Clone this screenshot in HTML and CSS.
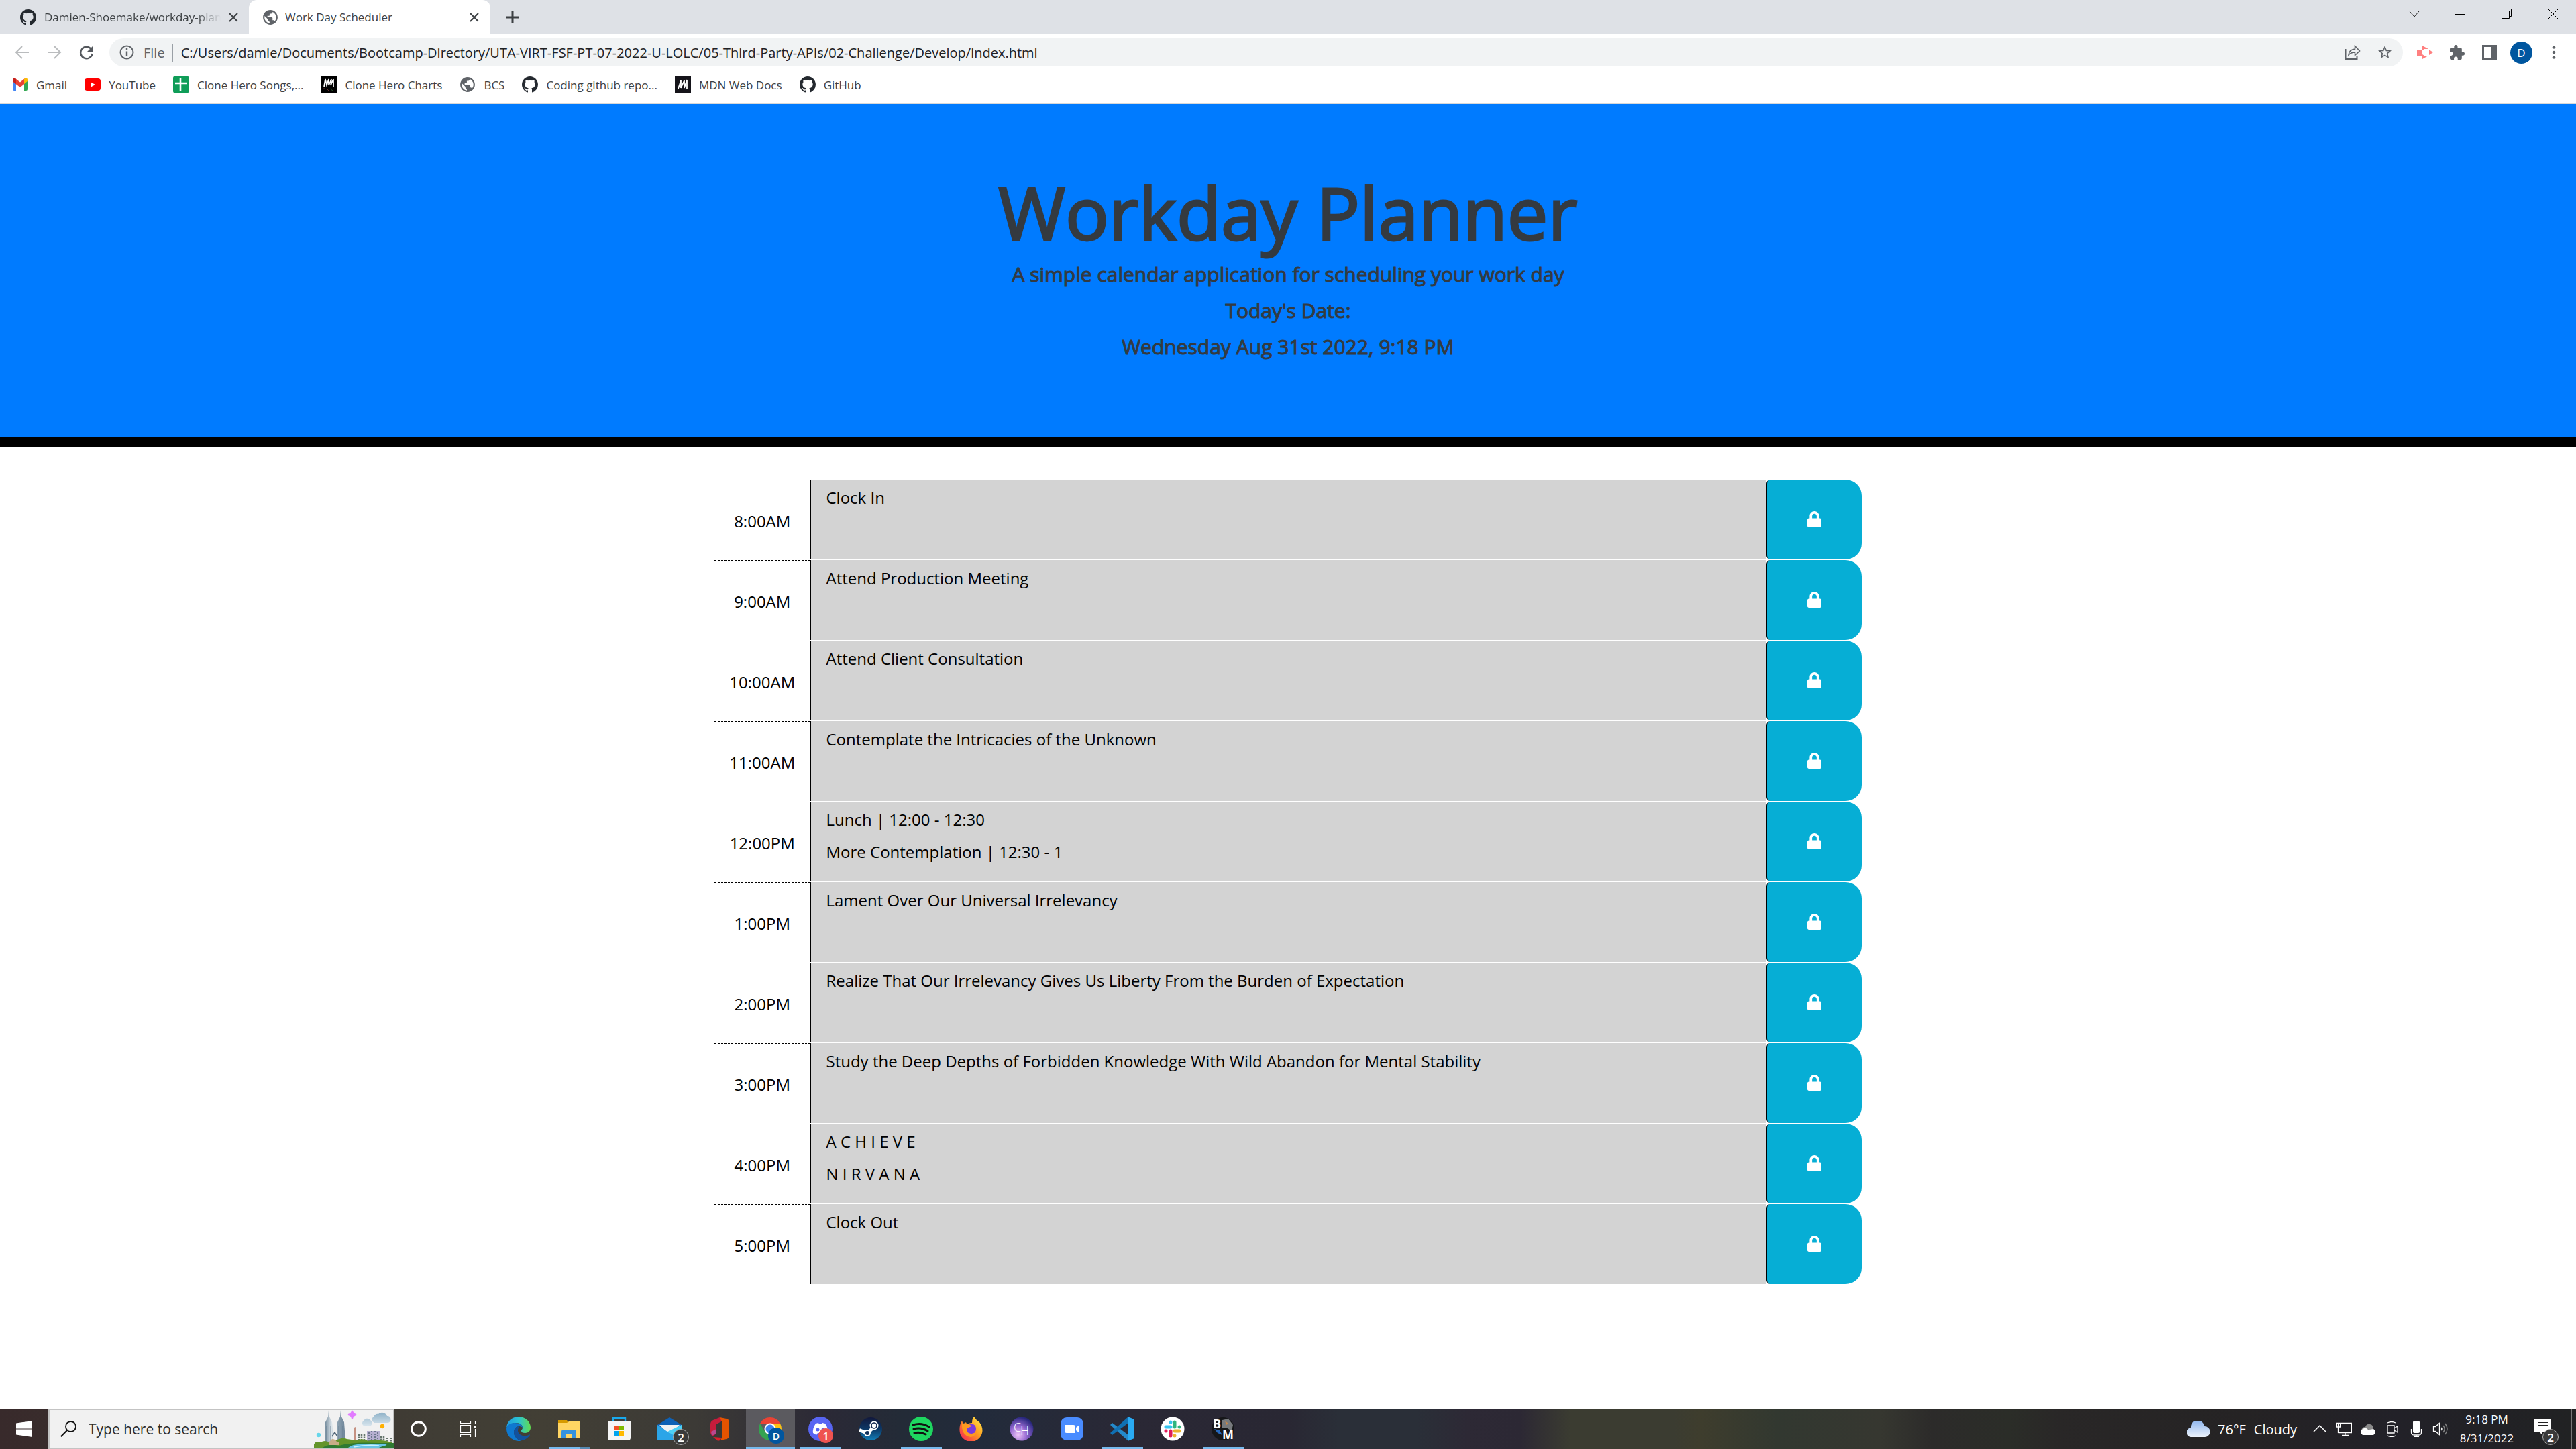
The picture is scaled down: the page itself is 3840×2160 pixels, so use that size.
FILE: index.html
```html
<!DOCTYPE html>
<html lang="en">
<head>
<meta charset="utf-8">
<title>Work Day Scheduler</title>
<link rel="stylesheet" href="styles.css">
</head>
<body>
<svg class="defs" aria-hidden="true">
  <symbol id="github" viewBox="0 0 16 16"><path d="M8 0C3.58 0 0 3.58 0 8c0 3.54 2.29 6.53 5.47 7.59.4.07.55-.17.55-.38 0-.19-.01-.82-.01-1.49-2.01.37-2.53-.49-2.69-.94-.09-.23-.48-.94-.82-1.13-.28-.15-.68-.52-.01-.53.63-.01 1.08.58 1.23.82.72 1.21 1.87.87 2.33.66.07-.52.28-.87.51-1.07-1.78-.2-3.64-.89-3.64-3.95 0-.87.31-1.59.82-2.15-.08-.2-.36-1.02.08-2.12 0 0 .67-.21 2.2.82.64-.18 1.32-.27 2-.27s1.36.09 2 .27c1.53-1.04 2.2-.82 2.2-.82.44 1.1.16 1.92.08 2.12.51.56.82 1.27.82 2.15 0 3.07-1.87 3.75-3.65 3.95.29.25.54.73.54 1.48 0 1.07-.01 1.93-.01 2.2 0 .21.15.46.55.38A8.01 8.01 0 0 0 16 8c0-4.42-3.58-8-8-8z" fill="#24292f"/></symbol>
  <symbol id="globe" viewBox="1 1 22 22"><path fill="#5f6368" d="M12 2C6.480 2 2 6.480 2 12s4.480 10 10 10 10-4.480 10-10S17.520 2 12 2zm-1 17.930c-3.950-.49-7-3.850-7-7.930 0-.62.08-1.210.21-1.790L9 15v1c0 1.100.9 2 2 2v1.930zm6.900-2.540c-.26-.81-1-1.390-1.900-1.390h-1v-3c0-.55-.45-1-1-1H8v-2h2c.55 0 1-.45 1-1V7h2c1.100 0 2-.9 2-2v-.41c2.930 1.190 5 4.060 5 7.410 0 2.080-.8 3.970-2.100 5.390z"/></symbol>
  <symbol id="close" viewBox="0 0 14 14"><path d="M1 1l12 12M13 1L1 13" stroke="#3c4043" stroke-width="2" fill="none"/></symbol>
  <symbol id="lock" viewBox="0 0 448 512"><path fill="#fff" d="M400 224h-24v-72C376 68.200 307.800 0 224 0S72 68.200 72 152v72H48c-26.500 0-48 21.500-48 48v192c0 26.500 21.500 48 48 48h352c26.500 0 48-21.500 48-48V272c0-26.500-21.500-48-48-48zm-104 0H152v-72c0-39.700 32.300-72 72-72s72 32.300 72 72v72z"/></symbol>
</svg>

<header class="browser">
  <div class="tabs">
    <div class="tab">
      <svg class="favicon"><use href="#github"/></svg>
      <span class="tab-title faded">Damien-Shoemake/workday-planner</span>
      <button class="tab-close" aria-label="Close tab"><svg><use href="#close"/></svg></button>
    </div>
    <div class="tab active">
      <svg class="favicon"><use href="#globe"/></svg>
      <span class="tab-title">Work Day Scheduler</span>
      <button class="tab-close" aria-label="Close tab"><svg><use href="#close"/></svg></button>
    </div>
    <button class="new-tab" aria-label="New tab"><svg width="18" height="18" viewBox="0 0 18 18"><path d="M9 0v18M0 9h18" stroke="#3c4043" stroke-width="3"/></svg></button>
    <div class="window-controls">
      <button aria-label="Search tabs"><svg width="16" height="16" viewBox="0 0 16 16"><path d="M1 4l7 8 7-8" fill="none" stroke="#222"/></svg></button>
      <button aria-label="Minimize"><svg width="16" height="16" viewBox="0 0 16 16"><path d="M0 8.500h15" stroke="#000"/></svg></button>
      <button aria-label="Restore"><svg width="16" height="16" viewBox="0 0 16 16"><path d="M.5 3.500h11v11H.5zM3.500 3.500v-3h11v11h-3" fill="none" stroke="#000"/></svg></button>
      <button aria-label="Close"><svg width="16" height="16" viewBox="0 0 16 16"><path d="M.5.5l15 15M15.500.5l-15 15" stroke="#000"/></svg></button>
    </div>
  </div>

  <div class="toolbar">
    <div class="nav">
      <button aria-label="Back"><svg width="22" height="22" viewBox="0 0 22 22"><path d="M21 11H2M11 2L2 11l9 9" fill="none" stroke="#babcbe" stroke-width="2"/></svg></button>
      <button aria-label="Forward"><svg width="22" height="22" viewBox="0 0 22 22"><path d="M1 11h19M11 2l9 9-9 9" fill="none" stroke="#babcbe" stroke-width="2"/></svg></button>
      <button aria-label="Reload"><svg width="22" height="22" viewBox="0 0 22 22"><path d="M18 6.500A8.700 8.700 0 1 0 19.500 13" fill="none" stroke="#54585d" stroke-width="2.500"/><path d="M21 1v9h-9z" fill="#54585d"/></svg></button>
    </div>
    <div class="omnibox">
      <svg width="22" height="22" viewBox="0 0 22 22"><circle cx="11" cy="11" r="9.500" fill="none" stroke="#5f6368" stroke-width="2"/><path d="M11 5v2.500M11 9.500V17" stroke="#5f6368" stroke-width="2.400"/></svg>
      <label class="scheme" for="url">File</label>
      <input id="url" class="url" type="text" value="C:/Users/damie/Documents/Bootcamp-Directory/UTA-VIRT-FSF-PT-07-2022-U-LOLC/05-Third-Party-APIs/02-Challenge/Develop/index.html">
      <button aria-label="Share"><svg width="24" height="22" viewBox="0 0 24 22"><path d="M1.500 6v15h17v-4" fill="none" stroke="#5f6368" stroke-width="2"/><path d="M6 15c.5-5 4-8.500 9.500-9V1.500L22.500 9l-7 6.500V11C11.500 11 8.500 12 6 15z" fill="none" stroke="#5f6368" stroke-width="1.600"/></svg></button>
      <button aria-label="Bookmark this page"><svg width="22" height="22" viewBox="1 1 22 22"><path fill="#5f6368" d="M22 9.240l-7.190-.62L12 2 9.190 8.630 2 9.240l5.460 4.730L5.820 21 12 17.270 18.180 21l-1.630-7.030L22 9.240zM12 15.400l-3.760 2.270 1-4.280-3.320-2.880 4.380-.38L12 6.100l1.710 4.040 4.380.38-3.320 2.880 1 4.280L12 15.400z"/></svg></button>
    </div>
    <div class="extensions">
      <button aria-label="Screen recorder"><svg width="24" height="20" viewBox="0 0 24 20"><path fill="#ff8080" d="M0 6h7v9H0zM8 0l9 5H11l-3 2zM8 20l9-5H11l-3-2zM18 6l6 4-6 4z"/><path d="M8 8h2V6h7v8h-7v-2H8z" fill="#fff"/></svg></button>
      <button aria-label="Extensions"><svg width="22" height="22" viewBox="2 1 21 21"><path fill="#5f6368" d="M20.500 11H19V7c0-1.100-.9-2-2-2h-4V3.500a2.500 2.500 0 0 0-5 0V5H4c-1.100 0-2 .9-2 2v3.800h1.500a2.700 2.700 0 0 1 0 5.400H2V20c0 1.100.9 2 2 2h3.800v-1.500a2.700 2.700 0 0 1 5.400 0V22H17c1.100 0 2-.9 2-2v-4h1.500a2.500 2.500 0 0 0 0-5z"/></svg></button>
      <button aria-label="Side panel"><svg width="22" height="22" viewBox="0 0 22 22"><path fill="#5f6368" fill-rule="evenodd" d="M0 0h22v22H0zM3 3v16h11V3z"/></svg></button>
      <button class="avatar" aria-label="Profile">D</button>
      <button aria-label="Menu"><svg width="6" height="20" viewBox="0 0 6 20"><g fill="#5f6368"><circle cx="3" cy="2.500" r="2.300"/><circle cx="3" cy="10" r="2.300"/><circle cx="3" cy="17.500" r="2.300"/></g></svg></button>
    </div>
  </div>

  <nav class="bookmarks">
    <a href="#"><svg viewBox="0 0 24 24"><path fill="#4285f4" d="M1 6l5 4v11H3a2 2 0 0 1-2-2z"/><path fill="#34a853" d="M23 6l-5 4v11h3a2 2 0 0 0 2-2z"/><path fill="#ea4335" d="M1 6V4.500C1 2.500 3.500 2 5 3l7 5.500L19 3v7.500L12 16 1 7.500z"/><path fill="#fbbc04" d="M18 4l1-1c2-1 4 0 4 1.500V7l-5 4z"/><path fill="#c5221f" d="M1 4.500C1 3 3 2 5 3l1 1v7L1 7z"/></svg>Gmail</a>
    <a href="#"><svg viewBox="0 0 24 24"><rect y="3" width="24" height="18" rx="4" fill="#f00"/><path fill="#fff" d="M9.500 8.500v7L16 12z"/></svg>YouTube</a>
    <a href="#"><svg viewBox="0 0 24 24"><rect width="24" height="24" rx="2" fill="#0f9d58"/><path d="M11 3v19M3 10h18" stroke="#fff" stroke-width="2.600"/></svg>Clone Hero Songs,...</a>
    <a href="#"><svg viewBox="0 0 24 24"><path d="M0 0h24v24H0z"/><path d="M5 15l2-11 2 9 3-9v9l4-9-1 9 4-9v11" fill="none" stroke="#fff" stroke-width="1.700"/><path d="M4 18h3M9 18l3 3" stroke="#662d2d"/><path d="M14 18l4 3" stroke="#315b31"/></svg>Clone Hero Charts</a>
    <a href="#"><svg><use href="#globe"/></svg>BCS</a>
    <a href="#"><svg><use href="#github"/></svg>Coding github repo...</a>
    <a href="#"><svg viewBox="0 0 24 24"><path fill="#15141a" d="M0 0h24v24H0z"/><path d="M5 18L9 6v11l5-11v11l4-12v13" fill="none" stroke="#fff" stroke-width="1.800"/></svg>MDN Web Docs</a>
    <a href="#"><svg><use href="#github"/></svg>GitHub</a>
  </nav>
</header>

<main class="page">
  <section class="jumbotron">
    <h1>Workday Planner</h1>
    <p>A simple calendar application for scheduling your work day</p>
    <p>Today's Date:</p>
    <p>Wednesday Aug 31st 2022, 9:18 PM</p>
  </section>
  <section class="planner">
    <div class="row"><label class="hour" for="h8">8:00AM</label><textarea id="h8">Clock In</textarea><button class="save" aria-label="Save"><svg><use href="#lock"/></svg></button></div>
    <div class="row"><label class="hour" for="h9">9:00AM</label><textarea id="h9">Attend Production Meeting</textarea><button class="save" aria-label="Save"><svg><use href="#lock"/></svg></button></div>
    <div class="row"><label class="hour" for="h10">10:00AM</label><textarea id="h10">Attend Client Consultation</textarea><button class="save" aria-label="Save"><svg><use href="#lock"/></svg></button></div>
    <div class="row"><label class="hour" for="h11">11:00AM</label><textarea id="h11">Contemplate the Intricacies of the Unknown</textarea><button class="save" aria-label="Save"><svg><use href="#lock"/></svg></button></div>
    <div class="row"><label class="hour" for="h12">12:00PM</label><textarea id="h12">Lunch | 12:00 - 12:30
More Contemplation | 12:30 - 1</textarea><button class="save" aria-label="Save"><svg><use href="#lock"/></svg></button></div>
    <div class="row"><label class="hour" for="h13">1:00PM</label><textarea id="h13">Lament Over Our Universal Irrelevancy</textarea><button class="save" aria-label="Save"><svg><use href="#lock"/></svg></button></div>
    <div class="row"><label class="hour" for="h14">2:00PM</label><textarea id="h14">Realize That Our Irrelevancy Gives Us Liberty From the Burden of Expectation</textarea><button class="save" aria-label="Save"><svg><use href="#lock"/></svg></button></div>
    <div class="row"><label class="hour" for="h15">3:00PM</label><textarea id="h15">Study the Deep Depths of Forbidden Knowledge With Wild Abandon for Mental Stability</textarea><button class="save" aria-label="Save"><svg><use href="#lock"/></svg></button></div>
    <div class="row"><label class="hour" for="h16">4:00PM</label><textarea id="h16">A C H I E V E
N I R V A N A</textarea><button class="save" aria-label="Save"><svg><use href="#lock"/></svg></button></div>
    <div class="row"><label class="hour" for="h17">5:00PM</label><textarea id="h17">Clock Out</textarea><button class="save" aria-label="Save"><svg><use href="#lock"/></svg></button></div>
  </section>
</main>

<footer class="taskbar">
  <button class="start" aria-label="Start"><svg width="24" height="24" viewBox="0 0 24 24"><path fill="#fff" d="M0 3.500l10-1.400v9.400H0zM11 2l13-2v11.500H11zM0 12.500h10v9.400L0 20.500zM11 12.500h13V24l-13-2z"/></svg></button>
  <div class="search">
    <svg width="24" height="24" viewBox="0 0 24 24"><circle cx="15.500" cy="8.500" r="7.500" fill="none" stroke="#111" stroke-width="1.800"/><path d="M10 14L.8 23.200" stroke="#111" stroke-width="2"/></svg>
    <input type="text" placeholder="Type here to search" aria-label="Type here to search">
    <svg class="city" width="120" height="58" viewBox="0 0 120 58">
      <defs><linearGradient id="tower"><stop offset="0" stop-color="#6f8799"/><stop offset=".35" stop-color="#dbe4ea"/><stop offset=".6" stop-color="#8fa4b4"/><stop offset="1" stop-color="#71879a"/></linearGradient>
      <linearGradient id="cloud" x2="0" y2="1"><stop offset="0" stop-color="#8fb2c8"/><stop offset="1" stop-color="#d5e3ec"/></linearGradient></defs>
      <path fill="url(#tower)" d="M22 1l1 10 4 8 1 13v18H16V32l1-13 4-8zM40 1l1 10 4 8 1 13v18H34V32l1-13 4-8z"/>
      <path d="M19 24v24M25 24v24M37 24v24M43 24v24" stroke="#5f7789" stroke-width=".7"/>
      <path d="M27 40l4-6 4 6" fill="none" stroke="#4f6476" stroke-width="1.500"/>
      <path d="M57 2q1 5 6 6-5 1-6 6-1-5-6-6 5-1 6-6z" fill="#e27bff" stroke="#e27bff" stroke-width="2"/>
      <path fill="url(#cloud)" d="M74 24a4 4 0 0 1 0-7 6 6 0 0 1 10-1 5 5 0 0 1 1 8zM90 20a5 5 0 0 1-1-9 6 6 0 0 1 7-4 8 8 0 0 1 13 3 5 5 0 0 1 1 10z"/>
      <circle cx="102" cy="25" r="3.200" fill="#ffb000"/><circle cx="7" cy="38" r="3.200" fill="#66d6ea"/>
      <path d="M60 27l2-1v24h-2z" fill="#c59181"/>
      <path d="M67 37v14M71 37v14M75 37v14M100 40v11M104 40v11M109 42v9M115 42v9" stroke="#65756c" stroke-width="2.500" stroke-dasharray="2 1.500"/>
      <path d="M79 32h20v18H79z" fill="#b6afd0"/><path d="M82 34v16M86 32v18M91 32v18M95 34v16" stroke="#647184" stroke-width="1.800" stroke-dasharray="2 2"/>
      <path fill="#63942a" d="M0 58v-6q3-6 10-3 6-4 13 0 8-3 15-5 6-3 11 0l14 2q10-4 18 1 10-4 18-1 10 0 21 5v7z"/>
      <path fill="#2e7a32" d="M12 58q8-8 25-4 20-6 60-4h23v8z"/>
      <path fill="#c7ad88" d="M22 53v-5q3-1 5-4 5 0 7 4l4 1v4z"/>
      <path d="M51 57q6-6 27-5l28-1q6 2-4 4l-8 3z" fill="#68c5e6"/><path d="M59 56q20-4 38-2" fill="none" stroke="#c9f1ff" stroke-width="1.500"/>
    </svg>
  </div>
  <button class="app cortana" aria-label="Cortana"><svg width="24" height="24" viewBox="0 0 24 24"><circle cx="12" cy="12" r="10.300" fill="none" stroke="#fff" stroke-width="3"/></svg></button>
  <button class="app" aria-label="Task view"><svg width="24" height="24" viewBox="0 0 24 24"><path d="M.5 0v3.500h15V0M.5 6.500h15v11H.5zM.5 24v-3.500h15V24M22.500 0v5M22.500 12v12" fill="none" stroke="#fff" stroke-width="1.200"/><path fill="#fff" d="M21 7h3v3h-3z"/></svg></button>

  <button class="app" aria-label="Edge"><svg viewBox="0 0 36 36"><defs><linearGradient id="e1"><stop offset="0" stop-color="#1f9de0"/><stop offset=".5" stop-color="#2bc3d2"/><stop offset="1" stop-color="#62dc4e"/></linearGradient></defs><path fill="url(#e1)" d="M0 16C1 6 9 0 18 0c11 0 18 8 18 16 0 5-4 8-8 8-4 0-6-1-6-3s2-2 2-5c0-4-4-7-9-7C8 9 2 12 0 16z"/><path fill="#0f79d0" d="M0 17c1-5 6-8 12-8 7 0 12 3 12 7-1-1-3-2-5-2-5 0-8 4-8 9 0 6 5 11 11 13C9 37 0 29 0 17z"/><path fill="#12529e" d="M19 14c-6 1-8 5-8 9 0 8 8 13 13 12 5-1 9-5 11-8 0-1-1-1-2 0-7 3-15 0-16-6 0-3 1-6 2-7z"/></svg></button>
  <button class="app open stacked" aria-label="File Explorer"><svg viewBox="0 0 36 36"><path fill="#d69a00" d="M2 5h13l2 3-2 4H2z"/><path fill="#ffd563" d="M2 9h13l3-2h16v24H2z"/><path fill="#3492de" d="M7 31V22q0-3 3-3h16q3 0 3 3v9h-6v-5H13v5z"/></svg></button>
  <button class="app" aria-label="Store"><svg viewBox="0 0 36 36"><path d="M9 9V2h18v7" fill="none" stroke="#19a9ed" stroke-width="2.400"/><path fill="#f5f5f5" d="M1 6h34v25a4 4 0 0 1-4 4H5a4 4 0 0 1-4-4z"/><path fill="#f25022" d="M10 13h7v7h-7z"/><path fill="#7fba00" d="M18 13h7v7h-7z"/><path fill="#00a4ef" d="M10 21h7v7h-7z"/><path fill="#ffb900" d="M18 21h7v7h-7z"/></svg></button>
  <button class="app" aria-label="Mail"><svg viewBox="0 0 36 36"><path fill="#0f61b5" d="M0 12L18 1l18 11v8H0z"/><path fill="#f2f2f2" d="M3 12h30L18 27z"/><path fill="#2ba5e8" d="M0 12l18 12 18-12v22H0z"/><path fill="#4fd0f5" d="M36 12v22L15 22z"/></svg><span class="badge dark">2</span></button>
  <button class="app" aria-label="Office"><svg viewBox="0 0 36 36"><path fill="#c51c3b" d="M18 1l6 4-11 6v14l-6 4-3-5V11q0-4 4-6z"/><path fill="#b8488f" d="M5 22l8-4v7l-7 3z"/><path fill="#e55300" d="M18 1l10 2q4 1 4 5v20q0 4-4 5l-9 2 2-4V7z"/><path fill="#dd1f2b" d="M8 30l13 1-3 4q-2 1-4 0z"/></svg></button>
  <button class="app open current" aria-label="Chrome"><svg viewBox="0 0 36 36"><path fill="#e94335" d="M3 10A17 17 0 0 1 33 10L18 11z"/><path fill="#fbc116" d="M18 10h15a17 17 0 0 1-15 25l8-15z"/><path fill="#34a350" d="M3 10l8 13 8 5-3 7A17 17 0 0 1 3 10z"/><circle cx="18" cy="18" r="8.500" fill="#fff"/><circle cx="18" cy="18" r="6.500" fill="#3c82f0"/></svg><span class="badge profile">D</span></button>
  <button class="app open" aria-label="Discord"><svg viewBox="0 0 36 36"><circle cx="18" cy="18" r="18" fill="#5865f2"/><path fill="#fff" d="M11 10l4-1 1 2h4l1-2 4 1q5 7 4 14l-5 3-2-3h-8l-2 3-5-3q-1-7 4-14z"/><circle cx="14" cy="19" r="2.500" fill="#5865f2"/><circle cx="22" cy="19" r="2.500" fill="#5865f2"/></svg><span class="badge red">1</span></button>
  <button class="app" aria-label="Steam"><svg viewBox="0 0 36 36"><defs><linearGradient id="st" x2="0" y2="1"><stop offset="0" stop-color="#12183c"/><stop offset=".5" stop-color="#0c3866"/><stop offset="1" stop-color="#137eb8"/></linearGradient></defs><circle cx="18" cy="18" r="17" fill="url(#st)"/><path d="M1 19.500l12 5 9-9" fill="none" stroke="#fff" stroke-width="5"/><circle cx="13" cy="24" r="5" fill="#fff"/><circle cx="13" cy="24" r="3" fill="#12325b"/><circle cx="23" cy="13" r="6.500" fill="#fff"/><circle cx="23" cy="13" r="4" fill="none" stroke="#12264c" stroke-width="1.600"/></svg></button>
  <button class="app open" aria-label="Spotify"><svg viewBox="0 0 36 36"><circle cx="18" cy="18" r="18" fill="#1ed760"/><path d="M6 12q13-4 24 3M7 18q11-3 21 3M8 24q9-2 17 2" fill="none" stroke="#111" stroke-width="3" stroke-linecap="round"/></svg></button>
  <button class="app" aria-label="Firefox"><svg viewBox="0 0 36 36"><defs><linearGradient id="ff" x1="1" x2="0" y2="1"><stop offset="0" stop-color="#fff44f"/><stop offset=".45" stop-color="#ff9a1f"/><stop offset="1" stop-color="#f4155e"/></linearGradient></defs><path fill="url(#ff)" d="M22 0q3 5 8 8 6 8 4 16A17 17 0 0 1 1 24Q-1 14 4 6l2 5 4-3 1 3q4-2 8-2 0-6 3-9z"/><circle cx="17" cy="18" r="8" fill="#7a3bdc"/><path fill="#ff9a1f" d="M4 10q10-2 14 4l-6 3q-3 4 2 7 8 3 12-4-1 9-9 10Q3 28 4 10z"/></svg></button>
  <button class="app" aria-label="Clone Hero"><svg viewBox="0 0 36 36"><defs><radialGradient id="ch" cx=".35" cy=".75" r=".75"><stop offset="0" stop-color="#f0c6fa"/><stop offset=".5" stop-color="#9367cf"/><stop offset="1" stop-color="#28277d"/></radialGradient></defs><circle cx="18" cy="18" r="17.500" fill="url(#ch)"/><text x="6" y="22" class="ch">C</text><text x="16" y="27" class="ch">H</text></svg></button>
  <button class="app" aria-label="Zoom"><svg viewBox="0 0 36 36"><rect x="1" y="1" width="34" height="34" rx="9" fill="#4a8cff"/><path fill="#fff" d="M7 12h13q3 0 3 3v9H10q-3 0-3-3zM24 16l5-4v12l-5-4z"/></svg></button>
  <button class="app open" aria-label="Visual Studio Code"><svg viewBox="0 0 36 36"><path fill="#2489ca" d="M0 12l3-3 24 18v9z"/><path fill="#1070b3" d="M0 24l3 3L27 9V0z"/><path fill="#2aaaf2" d="M26 0l10 4v28l-10 4z"/></svg></button>
  <button class="app" aria-label="Slack"><svg viewBox="0 0 36 36"><circle cx="18" cy="18" r="17.500" fill="#fff"/><g stroke-width="5" stroke-linecap="round"><path d="M8 15h7M15 8v0" stroke="#36c5f0"/><path d="M21 8v7M28 15v0" stroke="#2eb67d"/><path d="M21 21h7M21 28v0" stroke="#ecb22e"/><path d="M15 21v7M8 21v0" stroke="#e01e5a"/></g></svg></button>
  <button class="app open" aria-label="BM"><svg class="bm-logo" viewBox="0 0 36 36"><circle cx="18" cy="18" r="17" fill="#151618"/><path fill="#777a7d" d="M17 5l9-2 7 9-2 9-8-5-6 1z"/><path fill="#c6874b" d="M21 6l5 4-3 2z"/><path fill="#2668bd" d="M5 18l8 2 4 7-7-3z"/><text x="3" y="17" class="bm">B</text><text x="17" y="33" class="bm">M</text></svg></button>

  <div class="tray">
    <div class="weather"><svg width="34" height="24" viewBox="0 0 34 24"><defs><linearGradient id="wc" x2="0" y2="1"><stop offset="0" stop-color="#8db5ee"/><stop offset="1" stop-color="#eef3fb"/></linearGradient></defs><path fill="url(#wc)" d="M7 24a7 7 0 0 1-1-14 10 10 0 0 1 20-2 8 8 0 0 1 1 16z"/></svg><span>76°F</span><span>Cloudy</span></div>
    <div class="tray-icons">
      <svg viewBox="0 0 24 24"><path d="M3 16l9-9 9 9" fill="none" stroke="#fff" stroke-width="1.500"/></svg>
      <svg viewBox="0 0 24 24"><path d="M8 3.500h15.500v14H4V10M14 18v4M9 21.500h10M.5 3.500h6V9h-6zM3.500 5v13" fill="none" stroke="#fff" stroke-width="1.300"/></svg>
      <svg viewBox="0 0 24 24"><path fill="#8a8a8a" d="M2 14q1-5 6-5 2-5 7-4 5 1 5 7z"/><path fill="#fff" d="M4 21a5 5 0 0 1 0-9q5-3 8 1l8-1a5 5 0 0 1 0 9z"/></svg>
      <svg viewBox="0 0 24 24"><path d="M5 7h10v11H5zM15 11l5-3v9l-5-3M5 3q6-3 12 0M5 22q6 3 12 0" fill="none" stroke="#fff" stroke-width="1.300"/></svg>
      <svg viewBox="0 0 24 24"><rect x="7" width="10" height="18" rx="2" fill="#fff"/><path d="M4.500 12v5q0 4 4 4h7q4 0 4-4v-5M12 21v2M8 23.500h8" fill="none" stroke="#fff" stroke-width="1.300"/></svg>
      <svg viewBox="0 0 24 24"><path d="M1.500 8.500h3l6-5v17l-6-5h-3zM13 10q2 2 0 4" fill="none" stroke="#fff" stroke-width="1.300"/><path d="M16 7q4 5 0 10M19 4q6 8 0 16" fill="none" stroke="#888" stroke-width="1.300"/></svg>
    </div>
    <div class="clock"><span>9:18 PM</span><span>8/31/2022</span></div>
    <button class="notices" aria-label="Notifications"><svg width="36" height="36" viewBox="0 0 36 36"><path fill="#fff" d="M0 0h25v19H12v5l-5-5H0z"/><path d="M5 5.500h15M5 9.500h15M5 13.500h9" stroke="#222"/></svg><span class="badge dark">2</span></button>
  </div>
</footer>
</body>
</html>
```
FILE: styles.css
```css
* { box-sizing: border-box; }

body {
  margin: 0;
  min-height: 100vh;
  display: flex;
  flex-direction: column;
  background: #fff;
  color: #000;
  font-family: "Open Sans", "Noto Sans", sans-serif;
  font-size: 17px;
}

.defs { position: absolute; width: 0; height: 0; }

svg { display: block; flex: none; }

button {
  border: 0;
  padding: 0;
  background: none;
  font: inherit;
  color: inherit;
  display: flex;
  align-items: center;
  justify-content: center;
}

input, textarea {
  border: 0;
  margin: 0;
  padding: 0;
  background: none;
  font: inherit;
  color: inherit;
  outline: 0;
}

/* Browser window */
.browser { border-bottom: 2px solid #d6d8da; color: #3c4043; }

.tabs { display: flex; height: 51px; background: #dee1e6; }

.tab {
  display: flex;
  align-items: center;
  width: 360px;
  padding: 0 17px 0 20px;
}
.tab:first-child { width: 371px; padding: 0 16px 0 30px; }
.tab.active { background: #fff; border-radius: 12px 12px 0 0; }
.favicon { width: 24px; height: 24px; }
.tab-title {
  flex: 1;
  min-width: 0;
  margin: 0 12px;
  overflow: hidden;
  white-space: nowrap;
}
.active .tab-title { margin-left: 10px; }
.faded {
  -webkit-mask-image: linear-gradient(to right, #000 86%, transparent);
  mask-image: linear-gradient(to right, #000 86%, transparent);
}
.tab-close svg { width: 14px; height: 14px; }
.new-tab { width: 66px; }
.window-controls { display: flex; margin-left: auto; height: 42px; }
.window-controls button { width: 69px; }

.toolbar { display: flex; align-items: center; height: 54px; padding-right: 9px; }
.nav { display: flex; padding: 0 10px 0 9px; }
.nav button { width: 48px; height: 42px; }
.omnibox {
  flex: 1;
  display: flex;
  align-items: center;
  height: 42px;
  padding: 0 3px 0 15px;
  border-radius: 21px;
  background: #f1f3f4;
  font-size: 20px;
}
.omnibox button { width: 48px; height: 42px; }
.scheme {
  margin: 0 12px 0 14px;
  padding-right: 10px;
  border-right: 2px solid #9aa0a6;
  color: #5f6368;
}
.url { flex: 1; min-width: 0; color: #202124; }
.extensions { display: flex; align-items: center; padding-left: 9px; }
.extensions button { width: 48px; height: 42px; }
.extensions .avatar {
  width: 33px;
  height: 33px;
  margin: 0 8px 0 7px;
  border-radius: 50%;
  background: #00569f;
  color: #fff;
}

.bookmarks { display: flex; gap: 26px; height: 48px; padding: 0 0 6px 18px; }
.bookmarks a {
  display: flex;
  align-items: center;
  gap: 12px;
  color: #3c4043;
  text-decoration: none;
}
.bookmarks svg { width: 24px; height: 24px; }

/* Planner page */
.page { flex: 1; }

.jumbotron {
  height: 511px;
  padding-top: 96px;
  border-bottom: 15px solid #000;
  background: #007bff;
  color: #343a40;
  text-align: center;
  font-size: 30px;
  -webkit-text-stroke: 1px #343a40;
}
.jumbotron h1 {
  margin: 0;
  font-size: 108px;
  line-height: 131px;
  font-weight: 400;
  -webkit-text-stroke-width: 3px;
}
.jumbotron p { margin: 0; line-height: 54px; }

.planner { max-width: 1710px; margin: 49px auto; font-size: 24px; }
.row {
  display: grid;
  grid-template-columns: 1fr 10fr 1fr;
  height: 120px;
}
.hour {
  display: flex;
  align-items: center;
  justify-content: center;
  padding-top: 2px;
  border-top: 1px dashed #000;
}
.row textarea {
  height: 119px;
  padding: 3px 23px;
  border-left: 1px solid #000;
  background: #d3d3d3;
  line-height: 48px;
  resize: none;
  overflow: hidden;
}
.save {
  height: 119px;
  padding-bottom: 2px;
  border-left: 1px solid #000;
  border-radius: 6px 24px 24px 6px;
  background: #06aed5;
}
.save svg { width: 21px; height: 24px; }

/* Taskbar */
.taskbar {
  display: flex;
  height: 60px;
  background: linear-gradient(to right, #382a2b 0, #3b322f 9%, #403d35 17%, #423f35 21%, #3c3a36 27%, #2b2936 32%, #232b37 35%, #222b3b 38%, #2a2835 44%, #292733 50%, #2a2f38 52%, #2a2f38 55%, #2d2935 57%, #2c2834 59%, #3b3c31 61%, #3b3c31 65%, #3e3d2d 66%, #323830 69%, #363730 73%, #2c2b2a 75%, #2b2d28 78%, #292727 80%, #252324 87%, #222128 93%, #212223 100%);
  color: #fff;
}
.start { width: 72px; }
.search {
  display: flex;
  align-items: center;
  width: 516px;
  padding-left: 16px;
  border: 2px solid #c3c3c3;
  background: #f1f1f1;
  color: #222;
  font-size: 21px;
}
.search input { flex: 1; min-width: 0; margin-left: 18px; }
.search input::placeholder { color: #2b2b2b; opacity: 1; }
.city { margin-right: -2px; }
.app { position: relative; width: 75px; }
.app.cortana { width: 72px; }
.app > svg:not([width]) { width: 36px; height: 36px; }
.open::after {
  content: "";
  position: absolute;
  left: 8px;
  right: 6px;
  bottom: 0;
  height: 3px;
  background: #76b9ed;
}
.stacked::after { background: linear-gradient(to right, #76b9ed 47px, #5689b1 47px); }
.current { background: linear-gradient(to right, transparent 2px, #5b5a5f 2px); }
.current::after { left: 2px; right: 0; }
.badge {
  position: absolute;
  display: flex;
  align-items: center;
  justify-content: center;
  right: 8px;
  bottom: 6px;
  width: 24px;
  height: 24px;
  border-radius: 50%;
  font-size: 17px;
  font-weight: 600;
}
.badge.dark { border: 1px solid #aaa; background: #3a3a3a; }
.badge.profile { right: 16px; bottom: 8px; background: #00569f; font-size: 14px; }
.badge.red { right: 18px; bottom: 9px; width: 22px; height: 22px; background: #ef5350; }
.bm-logo { overflow: visible; }
.bm { fill: #fff; font-size: 18px; font-weight: 700; }
.ch { fill: #fff; font-size: 18px; font-weight: 300; }

.tray { display: flex; align-items: center; margin-left: auto; padding-right: 6px; }
.weather { display: flex; align-items: center; gap: 12px; font-size: 20px; }
.tray-icons { display: flex; gap: 12px; margin: 0 14px 0 22px; }
.tray-icons svg { width: 24px; height: 24px; }
.clock {
  display: flex;
  flex-direction: column;
  align-items: center;
  width: 86px;
  line-height: 28px;
  font-size: 17px;
}
.notices {
  position: relative;
  height: 60px;
  margin-left: 28px;
  padding: 6px 18px 0 0;
  border-right: 2px solid #777;
}
.notices .badge { right: 18px; }
```
